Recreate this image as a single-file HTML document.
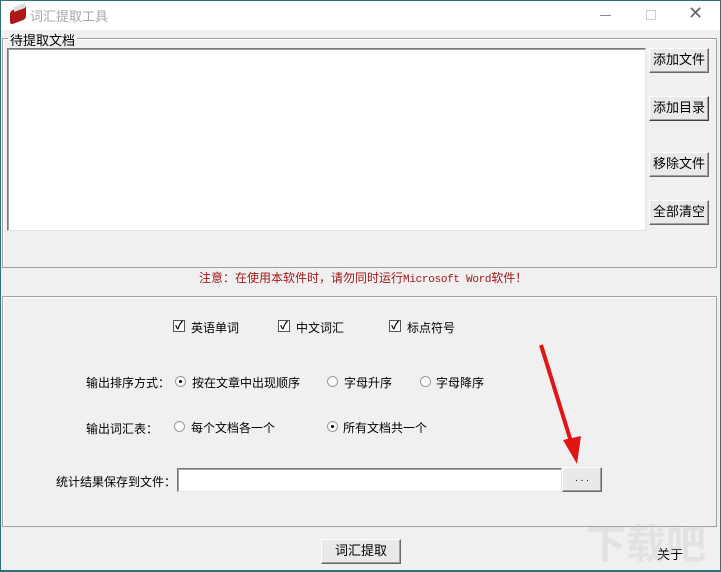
<!DOCTYPE html>
<html><head><meta charset="utf-8"><style>
*{margin:0;padding:0;box-sizing:border-box}
body{width:721px;height:572px;overflow:hidden;background:#f0f0f0;font-family:"Liberation Sans","Noto Sans CJK SC","WenQuanYi Zen Hei",sans-serif;font-size:12px;color:#000;position:relative}
.a{position:absolute}
.frame{left:0;top:0;width:721px;height:572px;border:1px solid #2f6f76;border-bottom:2px solid #2f6f76}
.title{left:1px;top:1px;width:719px;height:29px;background:#fff}
.btn{position:absolute;background:#e9e9e9;border:1px solid;border-color:#fff #696969 #696969 #fff;box-shadow:inset -1px -1px 0 #a0a0a0;text-align:center;font-size:13px}
.sunk{background:#fff;border:1px solid;border-color:#7a7a7a #e3e3e3 #e3e3e3 #7a7a7a;box-shadow:inset 1px 1px 0 #a0a0a0}
.cb{position:absolute;width:12px;height:12px;border:1px solid #555;background:#fff;font-size:11px;line-height:10px;text-align:center;font-weight:bold}
.rd{position:absolute;width:11px;height:11px;border-radius:50%;border:1px solid #999;background:#fff}
.rd.on::after{content:"";position:absolute;left:3px;top:3px;width:3px;height:3px;border-radius:50%;background:#000}
.t{position:absolute;font-size:12px;white-space:nowrap}
</style></head><body>
<div class="a title"></div>
<div class="a" style="left:10px;top:8px;width:16px;height:14px;background:#b01818;border-radius:3px;transform:skewY(-20deg)"></div>
<div class="a" style="left:14px;top:5px;width:11px;height:5px;background:#ddd;transform:skewY(-20deg)"></div>
<div class="t" style="left:30px;top:6px;color:#a8a8a8;font-size:13px">词汇提取工具</div>
<div class="a" style="left:600px;top:15px;width:11px;height:1px;background:#888"></div>
<div class="a" style="left:646px;top:10px;width:10px;height:10px;border:1px solid #ccc"></div>
<div class="t" style="left:688px;top:3px;font-size:18px;color:#666">✕</div>
<div class="a" style="left:2px;top:38px;width:715px;height:230px;border:1px solid #a0a0a0;box-shadow:inset 1px 1px 0 #fff"></div>
<div class="t" style="left:8px;top:30px;background:#f0f0f0;padding:0 2px;font-size:13px">待提取文档</div>
<div class="a sunk" style="left:7px;top:48px;width:639px;height:183px"></div>
<div class="btn" style="left:649px;top:48px;width:60px;height:25px;line-height:22px">添加文件</div>
<div class="btn" style="left:649px;top:96px;width:60px;height:25px;line-height:22px;border-color:#fff #404040 #404040 #fff">添加目录</div>
<div class="btn" style="left:649px;top:152px;width:60px;height:25px;line-height:22px">移除文件</div>
<div class="btn" style="left:649px;top:200px;width:60px;height:25px;line-height:22px">全部清空</div>
<div class="t" style="left:199px;top:269px;color:#a01818">注意：在使用本软件时，请勿同时运行<span style="font-family:'Liberation Mono',monospace;font-size:11px;letter-spacing:-0.3px">Microsoft Word</span>软件！</div>
<div class="a" style="left:2px;top:296px;width:715px;height:231px;border:1px solid #a0a0a0;box-shadow:inset 1px 1px 0 #fff"></div>
<div class="cb" style="left:173px;top:320px">✓</div><div class="t" style="left:191px;top:319px">英语单词</div>
<div class="cb" style="left:278px;top:320px">✓</div><div class="t" style="left:296px;top:319px">中文词汇</div>
<div class="cb" style="left:389px;top:320px">✓</div><div class="t" style="left:407px;top:319px">标点符号</div>
<div class="t" style="left:86px;top:374px">输出排序方式：</div>
<div class="rd on" style="left:175px;top:376px"></div><div class="t" style="left:192px;top:374px">按在文章中出现顺序</div>
<div class="rd" style="left:327px;top:376px"></div><div class="t" style="left:344px;top:374px">字母升序</div>
<div class="rd" style="left:420px;top:376px"></div><div class="t" style="left:436px;top:374px">字母降序</div>
<div class="t" style="left:86px;top:420px">输出词汇表：</div>
<div class="rd" style="left:174px;top:421px"></div><div class="t" style="left:191px;top:419px">每个文档各一个</div>
<div class="rd on" style="left:327px;top:421px"></div><div class="t" style="left:343px;top:419px">所有文档共一个</div>
<div class="t" style="left:56px;top:473px">统计结果保存到文件：</div>
<div class="a sunk" style="left:177px;top:468px;width:385px;height:24px"></div>
<div class="btn" style="left:562px;top:467px;width:40px;height:25px;line-height:22px;font-size:10px">. . .</div>
<svg class="a" style="left:535px;top:340px" width="50" height="130"><line x1="6" y1="5" x2="38" y2="108" stroke="#e01515" stroke-width="4"/><polygon points="28,100 46,96 42,124" fill="#e01515"/></svg>
<div class="btn" style="left:321px;top:539px;width:80px;height:25px;line-height:22px">词汇提取</div>
<div class="t" style="left:657px;top:544px;font-size:13px">关于</div>
<div class="t" style="left:586px;top:512px;font-size:40px;color:rgba(200,200,200,.35);font-weight:bold">下载吧</div>
<div class="a frame"></div>
</body></html>
